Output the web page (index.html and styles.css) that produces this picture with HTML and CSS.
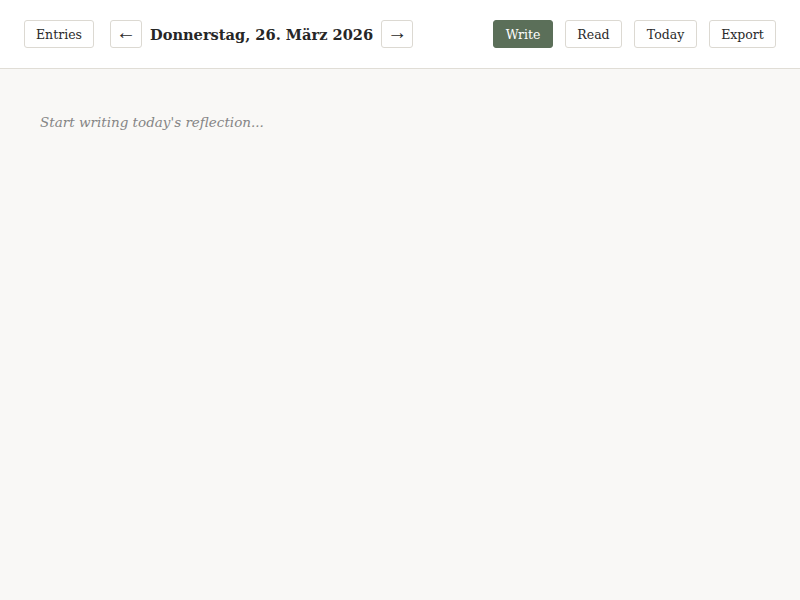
FILE: index.html
```html
<!DOCTYPE html>
<html lang="de">
<head>
<meta charset="utf-8">
<title>Journal</title>
<link rel="stylesheet" href="styles.css">
</head>
<body>
<header class="topbar">
  <div class="left">
    <button class="btn btn-entries">Entries</button>
    <div class="datenav">
      <button class="btn btn-arrow">&larr;</button>
      <h1 class="date">Donnerstag, 26. März 2026</h1>
      <button class="btn btn-arrow">&rarr;</button>
    </div>
  </div>
  <div class="right">
    <button class="btn btn-active btn-write">Write</button>
    <button class="btn btn-read">Read</button>
    <button class="btn btn-today">Today</button>
    <button class="btn btn-export">Export</button>
  </div>
</header>
<main class="editor">
  <div class="placeholder">Start writing today's reflection...</div>
</main>
</body>
</html>
```
FILE: styles.css
```css
html, body {
  margin: 0;
  padding: 0;
  height: 100%;
}
body {
  background: #f9f8f6;
  font-family: "DejaVu Serif", "Liberation Serif", serif;
  color: #2a2a2a;
}
.topbar {
  height: 69px;
  box-sizing: border-box;
  background: #ffffff;
  border-bottom: 1px solid #e0ddd6;
  display: flex;
  align-items: center;
  justify-content: space-between;
  padding: 0 24px;
}
.left, .right, .datenav {
  display: flex;
  align-items: center;
}
.left { gap: 16px; }
.datenav { gap: 8px; }
.right { gap: 12px; }
.btn {
  height: 28px;
  box-sizing: border-box;
  border: 1px solid #dcd9d2;
  border-radius: 3px;
  background: #ffffff;
  color: #2a2a2a;
  font-family: inherit;
  font-size: 12.5px;
  padding: 0;
  cursor: pointer;
}
.btn-entries { width: 70px; }
.btn-arrow {
  width: 32px;
  font-family: "Liberation Serif", serif;
  font-size: 20px;
  line-height: 1;
  padding-bottom: 4px;
}
.btn-write { width: 60px; }
.btn-read { width: 57px; }
.btn-today { width: 63px; }
.btn-export { width: 67px; }
.btn-active {
  background: #5b6f59;
  border-color: #5b6f59;
  color: #ffffff;
}
.date {
  margin: 0;
  font-size: 14.6px;
  font-weight: bold;
  color: #262626;
  white-space: nowrap;
}
.editor {
  padding: 40px 40px;
}
.placeholder {
  font-style: italic;
  font-size: 13.5px;
  color: #858585;
  margin-top: 5px;
}
```
